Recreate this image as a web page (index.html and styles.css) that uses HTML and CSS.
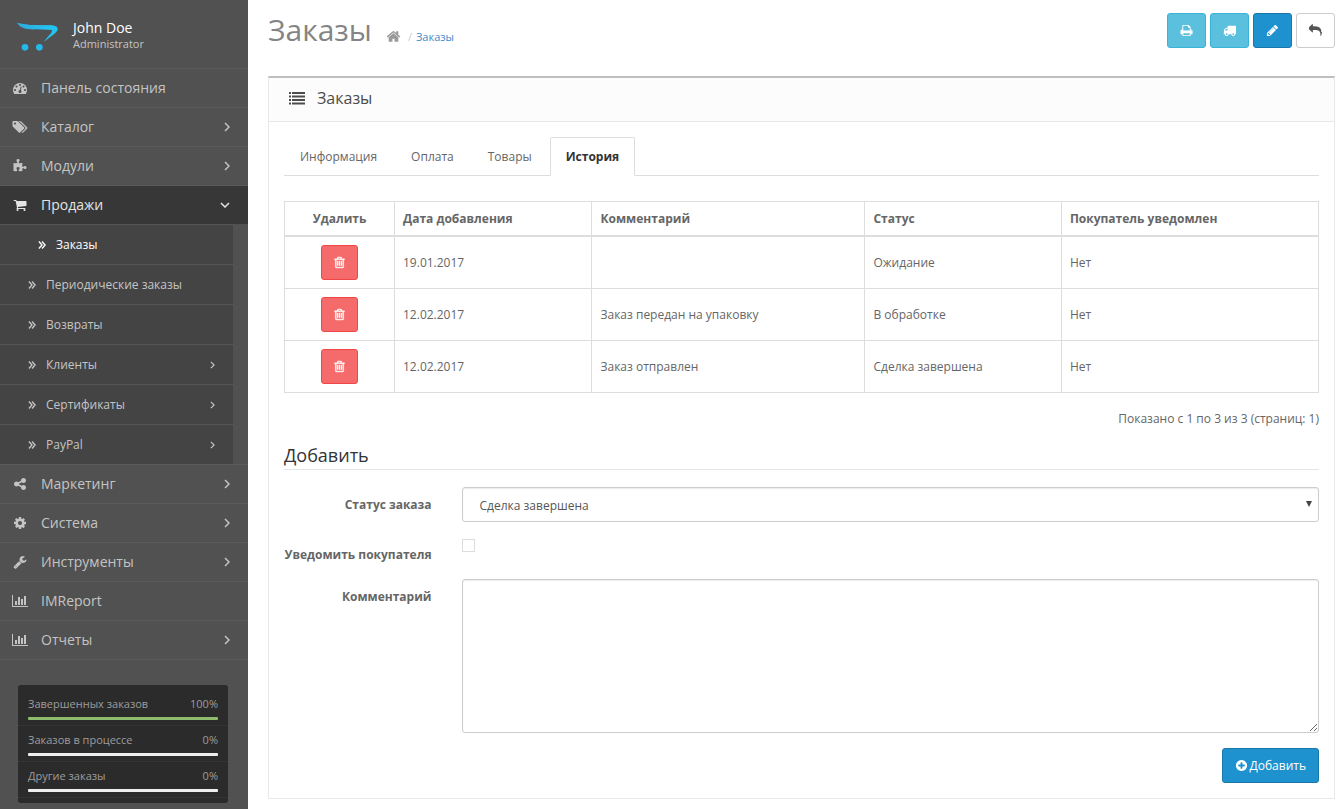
FILE: index.html
```
<!DOCTYPE html>
<html lang="ru">
<head>
<meta charset="utf-8">
<title>Заказы</title>
<link rel="stylesheet" href="styles.css">
</head>
<body>
<svg class="sprite" aria-hidden="true">
  <symbol id="i-dashboard" viewBox="0 0 1792 1792"><path d="M384 1152q0-53-37.5-90.5t-90.5-37.5-90.5 37.5-37.5 90.5 37.5 90.5 90.5 37.5 90.5-37.5 37.5-90.5zm192-448q0-53-37.5-90.5t-90.5-37.5-90.5 37.5-37.5 90.5 37.5 90.5 90.5 37.5 90.5-37.5 37.5-90.5zm428 481l101-382q6-26-7.5-48.5t-38.5-29.5-48 6.5-30 39.5l-101 382q-60 5-107 43.5t-63 98.5q-20 77 20 146t117 89 146-20 89-117q16-60-6-117t-72-91zm660-33q0-53-37.5-90.5t-90.5-37.5-90.5 37.5-37.5 90.5 37.5 90.5 90.5 37.5 90.5-37.5 37.5-90.5zm-640-640q0-53-37.5-90.5t-90.5-37.5-90.5 37.5-37.5 90.5 37.5 90.5 90.5 37.5 90.5-37.5 37.5-90.5zm448 192q0-53-37.5-90.5t-90.5-37.5-90.5 37.5-37.5 90.5 37.5 90.5 90.5 37.5 90.5-37.5 37.5-90.5zm320 448q0 261-141 483-19 29-54 29h-1402q-35 0-54-29-141-221-141-483 0-182 71-348t191-286 286-191 348-71 348 71 286 191 191 286 71 348z"/></symbol>
  <symbol id="i-tags" viewBox="0 0 1920 1792"><path d="M448 448q0-53-37.5-90.5t-90.5-37.5-90.5 37.5-37.5 90.5 37.5 90.5 90.5 37.5 90.5-37.5 37.5-90.5zm1067 576q0 53-37 90l-491 492q-39 37-91 37-53 0-90-37l-715-716q-38-37-64.5-101t-26.5-117v-416q0-52 38-90t90-38h416q53 0 117 26.5t102 64.5l715 714q37 39 37 91zm384 0q0 53-37 90l-491 492q-39 37-91 37-36 0-59-14t-53-45l470-470q37-37 37-90 0-52-37-91l-715-714q-38-38-102-64.5t-117-26.5h224q53 0 117 26.5t102 64.5l715 714q37 39 37 91z"/></symbol>
  <symbol id="i-puzzle" viewBox="0 0 1792 1792"><path d="M1728 1098q0 81-44.5 135t-123.5 54q-41 0-77.5-17.5t-59-38-56.5-38-71-17.5q-110 0-110 124 0 39 16 115t15 115v5q-22 0-33 1-34 3-97.5 11.5t-115.5 13.5-98 5q-61 0-103-26.5t-42-83.5q0-37 17.5-71t38-56.5 38-59 17.5-77.5q0-79-54-123.5t-136-44.5q-84 0-143 45.5t-59 127.5q0 43 15 83t33.5 64.5 33.5 53 15 50.5q0 45-46 89-37 35-117 35-95 0-245-24-9-2-27.5-4t-27.5-4l-13-2q-1 0-3-1-2 0-2-1v-1024q2 1 17.5 3.5t34 5 21.5 3.5q150 24 245 24 80 0 117-35 46-44 46-89 0-22-15-50.5t-33.5-53-33.5-64.5-15-83q0-82 59-127.5t144-45.5q80 0 134 44.5t54 123.5q0 41-17.5 77.5t-38 59-38 56.5-17.5 71q0 57 42 83.5t103 26.5q64 0 180-15t163-17v2q-1 2-3.5 17.5t-5 34-3.5 21.5q-24 150-24 245 0 80 35 117 44 46 89 46 22 0 50.5-15t53-33.5 64.5-33.5 83-15q82 0 127.5 59t45.5 143z"/></symbol>
  <symbol id="i-cart" viewBox="0 0 1792 1792"><path d="M704 1536q0 52-38 90t-90 38-90-38-38-90 38-90 90-38 90 38 38 90zm896 0q0 52-38 90t-90 38-90-38-38-90 38-90 90-38 90 38 38 90zm128-1088v512q0 24-16.5 42.5t-40.5 21.5l-1044 122q13 60 13 70 0 16-24 64h920q26 0 45 19t19 45-19 45-45 19h-1024q-26 0-45-19t-19-45q0-11 8-31.5t16-36 21.5-40 15.5-29.5l-177-823h-204q-26 0-45-19t-19-45 19-45 45-19h256q16 0 28.5 6.5t19.5 15.5 13 24.5 8 26 5.5 29.5 4.5 26h1201q26 0 45 19t19 45z"/></symbol>
  <symbol id="i-share" viewBox="0 0 1792 1792"><path d="M1344 1024q133 0 226.5 93.5t93.5 226.5-93.5 226.5-226.5 93.5-226.5-93.5-93.5-226.5q0-12 2-34l-360-180q-92 86-218 86-133 0-226.5-93.5t-93.5-226.5 93.5-226.5 226.5-93.5q126 0 218 86l360-180q-2-22-2-34 0-133 93.5-226.5t226.5-93.5 226.5 93.5 93.5 226.5-93.5 226.5-226.5 93.5q-126 0-218-86l-360 180q2 22 2 34t-2 34l360 180q92-86 218-86z"/></symbol>
  <symbol id="i-cog" viewBox="0 0 1792 1792"><path d="M1152 896q0-106-75-181t-181-75-181 75-75 181 75 181 181 75 181-75 75-181zm512-109v222q0 12-8 23t-20 13l-185 28q-19 54-39 91 35 50 107 138 10 12 10 25t-9 23q-27 37-99 108t-94 71q-12 0-26-9l-138-108q-44 23-91 38-16 136-29 186-7 28-36 28h-222q-14 0-24.5-8.5t-11.5-21.5l-28-184q-49-16-90-37l-141 107q-10 9-25 9-14 0-25-11-126-114-165-168-7-10-7-23 0-12 8-23 15-21 51-66.5t54-70.5q-27-50-41-99l-183-27q-13-2-21-12.5t-8-23.5v-222q0-12 8-23t19-13l186-28q14-46 39-92-40-57-107-138-10-12-10-24 0-10 9-23 26-36 98.5-107.5t94.5-71.5q13 0 26 10l138 107q44-23 91-38 16-136 29-186 7-28 36-28h222q14 0 24.5 8.5t11.5 21.5l28 184q49 16 90 37l142-107q9-9 24-9 13 0 25 10 129 119 165 170 7 8 7 22 0 12-8 23-15 21-51 66.5t-54 70.5q26 50 41 98l183 28q13 2 21 12.5t8 23.5z"/></symbol>
  <symbol id="i-wrench" viewBox="0 0 1792 1792"><path d="M448 1472q0-26-19-45t-45-19-45 19-19 45 19 45 45 19 45-19 19-45zm644-420l-682 682q-37 37-90 37-52 0-91-37l-106-108q-38-36-38-90 0-53 38-91l681-681q39 98 114.5 173.5t173.5 114.5zm634-435q0 39-23 106-47 134-164.5 217.5t-258.5 83.5q-185 0-316.5-131.5t-131.5-316.5 131.5-316.5 316.5-131.5q58 0 121.5 16.5t107.5 46.5q16 11 16 28t-16 28l-293 169v224l193 107q5-3 79-48.5t135.5-81 70.5-35.5q15 0 23.5 10t8.5 25z"/></symbol>
  <symbol id="i-chart" viewBox="0 0 2048 1792"><path d="M640 896v512h-256v-512h256zm384-512v1024h-256v-1024h256zm1024 1152v128h-2048v-1536h128v1408h1920zm-640-896v768h-256v-768h256zm384-384v1152h-256v-1152h256z"/></symbol>
  <symbol id="i-right" viewBox="0 0 6 10"><path d="M1 1l4 4-4 4" fill="none" stroke="currentColor" stroke-width="1.5"/></symbol>
  <symbol id="i-down" viewBox="0 0 10 6"><path d="M1 1l4 4 4-4" fill="none" stroke="currentColor" stroke-width="1.5"/></symbol>
  <symbol id="i-double" viewBox="0 0 9 10"><path d="M1 1l3.500 4-3.500 4M4.500 1l3.500 4-3.500 4" fill="none" stroke="currentColor" stroke-width="1.500"/></symbol>
  <symbol id="i-home" viewBox="0 0 1792 1792"><path d="M1472 992v480q0 26-19 45t-45 19h-384v-384h-256v384h-384q-26 0-45-19t-19-45v-480q0-1 .5-3t.5-3l575-474 575 474q1 2 1 6zm223-69l-62 74q-8 9-21 11h-3q-13 0-21-7l-692-577-692 577q-12 8-24 7-13-2-21-11l-62-74q-8-10-7-23.5t11-21.500l719-599q32-26 76-26t76 26l244 204v-195q0-14 9-23t23-9h192q14 0 23 9t9 23v408l219 182q10 8 11 21.500t-7 23.500z"/></symbol>
  <symbol id="i-list" viewBox="0 0 16 14"><path d="M0 1h2v2H0zM3 1h13v2H3zM0 4.500h2v2H0zM3 4.500h13v2H3zM0 8h2v2H0zM3 8h13v2H3zM0 11.500h2v2H0zM3 11.500h13v2H3z"/></symbol>
  <symbol id="i-print" viewBox="0 0 1792 1792"><path d="M448 1536h896v-256h-896v256zm0-640h896v-384h-160q-40 0-68-28t-28-68v-160h-640v640zm1152 64q0-26-19-45t-45-19-45 19-19 45 19 45 45 19 45-19 19-45zm128 0v416q0 13-9.500 22.500t-22.500 9.500h-224v160q0 40-28 68t-68 28h-960q-40 0-68-28t-28-68v-160h-224q-13 0-22.500-9.500t-9.500-22.500v-416q0-79 56.500-135.500t135.500-56.500h64v-544q0-40 28-68t68-28h672q40 0 88 20t76 48l152 152q28 28 48 76t20 88v256h64q79 0 135.500 56.500t56.500 135.500z"/></symbol>
  <symbol id="i-truck" viewBox="0 0 1792 1792"><path d="M640 1408q0-52-38-90t-90-38-90 38-38 90 38 90 90 38 90-38 38-90zm-384-512h384v-256h-158q-13 0-22 9l-195 195q-9 9-9 22v30zm1280 512q0-52-38-90t-90-38-90 38-38 90 38 90 90 38 90-38 38-90zm256-1088v1024q0 15-4 26.500t-13.500 18.500-16.500 11.500-23.500 6-22.500 2-25.500 0-22.500-.5q0 106-75 181t-181 75-181-75-75-181h-384q0 106-75 181t-181 75-181-75-75-181h-64q-3 0-22.500.5t-25.500 0-22.500-2-23.500-6-16.500-11.500-13.500-18.500-4-26.500q0-26 19-45t45-19v-320q0-8-.5-35t0-38 2.500-34.500 6.500-37 14-30.500 22.500-30l198-198q19-19 50.500-32t58.500-13h160v-192q0-26 19-45t45-19h1024q26 0 45 19t19 45z"/></symbol>
  <symbol id="i-pencil" viewBox="0 0 1792 1792"><path d="M491 1536l91-91-235-235-91 91v107h128v128h107zm523-928q0-22-22-22-10 0-17 7l-542 542q-7 7-7 17 0 22 22 22 10 0 17-7l542-542q7-7 7-17zm-54-192l416 416-832 832h-416v-416zm683 96q0 53-37 90l-166 166-416-416 166-165q36-38 90-38 53 0 91 38l235 234q37 39 37 91z"/></symbol>
  <symbol id="i-reply" viewBox="0 0 1792 1792"><path d="M1792 1120q0 166-127 451-3 7-10.500 24t-13.500 30-13 22q-12 17-28 17-15 0-23.500-10t-8.500-25q0-9 2.500-26.500t2.500-23.500q5-68 5-123 0-112-19.500-200.500t-54-153.500-89.500-112-120-79.500-150-48-178.500-21.500-206-6h-224v256q0 26-19 45t-45 19-45-19l-512-512q-19-19-19-45t19-45l512-512q19-19 45-19t45 19 19 45v256h224q713 0 875 403 53 134 53 333z"/></symbol>
  <symbol id="i-trash" viewBox="0 0 1792 1792"><path d="M704 736v576q0 14-9 23t-23 9h-64q-14 0-23-9t-9-23v-576q0-14 9-23t23-9h64q14 0 23 9t9 23zm256 0v576q0 14-9 23t-23 9h-64q-14 0-23-9t-9-23v-576q0-14 9-23t23-9h64q14 0 23 9t9 23zm256 0v576q0 14-9 23t-23 9h-64q-14 0-23-9t-9-23v-576q0-14 9-23t23-9h64q14 0 23 9t9 23zm128 724v-948h-896v948q0 22 7 40.500t14.500 27 10.500 8.500h832q3 0 10.500-8.500t14.500-27 7-40.500zm-672-1076h448l-48-117q-7-9-17-11h-317q-10 2-17 11zm928 32v64q0 14-9 23t-23 9h-96v948q0 83-47 143.500t-113 60.500h-832q-66 0-113-58.500t-47-141.500v-952h-96q-14 0-23-9t-9-23v-64q0-14 9-23t23-9h309l70-167q15-37 54-63t79-26h320q40 0 79 26t54 63l70 167h309q14 0 23 9t9 23z"/></symbol>
  <symbol id="i-plus" viewBox="0 0 1792 1792"><path d="M1344 960v-128q0-26-19-45t-45-19h-256v-256q0-26-19-45t-45-19h-128q-26 0-45 19t-19 45v256h-256q-26 0-45 19t-19 45v128q0 26 19 45t45 19h256v256q0 26 19 45t45 19h128q26 0 45-19t19-45v-256h256q26 0 45-19t19-45zm320-64q0 209-103 385.500t-279.500 279.500-385.500 103-385.500-103-279.500-279.500-103-385.500 103-385.500 279.500-279.500 385.500-103 385.500 103 279.500 279.500 103 385.500z"/></symbol>
</svg>
<div class="layout">
  <aside class="sidebar">
    <div class="profile">
      <svg class="logo" viewBox="48 68 126 90" aria-hidden="true">
        <defs><linearGradient id="cartFill" x1="0" y1="0" x2="1" y2="0"><stop offset="0" stop-color="#2fa9dd"/><stop offset="1" stop-color="#21c6f3"/></linearGradient></defs>
        <path fill="url(#cartFill)" d="M48 68C54 76 68 80 90 80L142 86C152 87 156 90 156 95C154 103 142 113 131 128C160 107 173 98 173 90C173 81 165 78 150 78L90 77C68 76 54 74 48 68Z"/>
        <circle fill="#24b9ec" cx="75" cy="144" r="10"/><circle fill="#24b9ec" cx="118" cy="144" r="10"/>
        <path fill="url(#cartFill)" d="M52 71C62 88 80 91 110 90L157 92L157 79L90 77Z"/>
      </svg>
      <div class="profile-text">
        <div class="profile-name">John Doe</div>
        <div class="profile-role">Administrator</div>
      </div>
    </div>
    <nav>
      <ul class="menu">
        <li><a class="menu-link" href="#"><svg class="menu-icon"><use href="#i-dashboard"/></svg><span>Панель состояния</span></a></li>
        <li><a class="menu-link" href="#"><svg class="menu-icon"><use href="#i-tags"/></svg><span>Каталог</span><svg class="chevron"><use href="#i-right"/></svg></a></li>
        <li><a class="menu-link" href="#"><svg class="menu-icon"><use href="#i-puzzle"/></svg><span>Модули</span><svg class="chevron"><use href="#i-right"/></svg></a></li>
        <li>
          <a class="menu-link menu-link-open" href="#"><svg class="menu-icon"><use href="#i-cart"/></svg><span>Продажи</span><svg class="chevron"><use href="#i-down"/></svg></a>
          <ul class="submenu">
            <li><a class="sub-link sub-link-active" href="#"><svg class="double"><use href="#i-double"/></svg><span>Заказы</span></a></li>
            <li><a class="sub-link" href="#"><svg class="double"><use href="#i-double"/></svg><span>Периодические заказы</span></a></li>
            <li><a class="sub-link" href="#"><svg class="double"><use href="#i-double"/></svg><span>Возвраты</span></a></li>
            <li><a class="sub-link" href="#"><svg class="double"><use href="#i-double"/></svg><span>Клиенты</span><svg class="chevron chevron-small"><use href="#i-right"/></svg></a></li>
            <li><a class="sub-link" href="#"><svg class="double"><use href="#i-double"/></svg><span>Сертификаты</span><svg class="chevron chevron-small"><use href="#i-right"/></svg></a></li>
            <li><a class="sub-link" href="#"><svg class="double"><use href="#i-double"/></svg><span>PayPal</span><svg class="chevron chevron-small"><use href="#i-right"/></svg></a></li>
          </ul>
        </li>
        <li><a class="menu-link" href="#"><svg class="menu-icon"><use href="#i-share"/></svg><span>Маркетинг</span><svg class="chevron"><use href="#i-right"/></svg></a></li>
        <li><a class="menu-link" href="#"><svg class="menu-icon"><use href="#i-cog"/></svg><span>Система</span><svg class="chevron"><use href="#i-right"/></svg></a></li>
        <li><a class="menu-link" href="#"><svg class="menu-icon"><use href="#i-wrench"/></svg><span>Инструменты</span><svg class="chevron"><use href="#i-right"/></svg></a></li>
        <li><a class="menu-link" href="#"><svg class="menu-icon"><use href="#i-chart"/></svg><span>IMReport</span></a></li>
        <li><a class="menu-link" href="#"><svg class="menu-icon"><use href="#i-chart"/></svg><span>Отчеты</span><svg class="chevron"><use href="#i-right"/></svg></a></li>
      </ul>
    </nav>
    <ul class="stats">
      <li><div class="stat-text"><span>Завершенных заказов</span><span>100%</span></div><div class="bar"><div class="bar-fill" style="width:100%"></div></div></li>
      <li><div class="stat-text"><span>Заказов в процессе</span><span>0%</span></div><div class="bar"><div class="bar-fill" style="width:0%"></div></div></li>
      <li><div class="stat-text"><span>Другие заказы</span><span>0%</span></div><div class="bar"><div class="bar-fill" style="width:0%"></div></div></li>
    </ul>
  </aside>
  <main class="content">
    <header class="page-header">
      <h1>Заказы</h1>
      <nav class="breadcrumb">
        <a class="crumb-home" href="#" aria-label="Главная"><svg class="home-icon"><use href="#i-home"/></svg></a>
        <span class="crumb-sep">/</span>
        <a class="crumb" href="#">Заказы</a>
      </nav>
      <div class="actions">
        <button class="btn btn-info" type="button" aria-label="Печать"><svg class="icon"><use href="#i-print"/></svg></button>
        <button class="btn btn-info" type="button" aria-label="Доставка"><svg class="icon"><use href="#i-truck"/></svg></button>
        <button class="btn btn-primary" type="button" aria-label="Редактировать"><svg class="icon"><use href="#i-pencil"/></svg></button>
        <button class="btn btn-default" type="button" aria-label="Назад"><svg class="icon"><use href="#i-reply"/></svg></button>
      </div>
    </header>
    <section class="panel">
      <div class="panel-heading"><svg class="list-icon"><use href="#i-list"/></svg><h2>Заказы</h2></div>
      <div class="panel-body">
        <ul class="tabs">
          <li><a class="tab" href="#">Информация</a></li>
          <li><a class="tab" href="#">Оплата</a></li>
          <li><a class="tab" href="#">Товары</a></li>
          <li><a class="tab tab-active" href="#">История</a></li>
        </ul>
        <table class="history">
          <colgroup><col class="col-delete"><col class="col-date"><col class="col-comment"><col class="col-status"><col></colgroup>
          <thead><tr><th class="center">Удалить</th><th>Дата добавления</th><th>Комментарий</th><th>Статус</th><th>Покупатель уведомлен</th></tr></thead>
          <tbody>
            <tr><td class="center"><button class="btn btn-danger" type="button" aria-label="Удалить"><svg class="icon"><use href="#i-trash"/></svg></button></td><td>19.01.2017</td><td></td><td>Ожидание</td><td>Нет</td></tr>
            <tr><td class="center"><button class="btn btn-danger" type="button" aria-label="Удалить"><svg class="icon"><use href="#i-trash"/></svg></button></td><td>12.02.2017</td><td>Заказ передан на упаковку</td><td>В обработке</td><td>Нет</td></tr>
            <tr><td class="center"><button class="btn btn-danger" type="button" aria-label="Удалить"><svg class="icon"><use href="#i-trash"/></svg></button></td><td>12.02.2017</td><td>Заказ отправлен</td><td>Сделка завершена</td><td>Нет</td></tr>
          </tbody>
        </table>
        <p class="shown">Показано с 1 по 3 из 3 (страниц: 1)</p>
        <form>
          <h3>Добавить</h3>
          <div class="form-row">
            <label for="status">Статус заказа</label>
            <div class="control select-wrap"><select id="status" class="field select"><option>Сделка завершена</option></select></div>
          </div>
          <div class="form-row">
            <label for="notify">Уведомить покупателя</label>
            <div class="control"><input id="notify" class="check" type="checkbox"></div>
          </div>
          <div class="form-row">
            <label for="comment">Комментарий</label>
            <div class="control"><textarea id="comment" class="field area"></textarea></div>
          </div>
          <div class="submit"><button class="btn btn-primary" type="button"><svg class="icon"><use href="#i-plus"/></svg><span>Добавить</span></button></div>
        </form>
      </div>
    </section>
  </main>
</div>
</body>
</html>
```
FILE: styles.css
```
* { box-sizing: border-box; }
body { margin: 0; background: #fff; color: #666; font: 12px/17px "Open Sans", "Noto Sans", sans-serif; }
ul { list-style: none; margin: 0; padding: 0; }
a { text-decoration: none; color: inherit; }
h1, h2, h3, p { margin: 0; }
svg { fill: currentColor; flex: none; }
.sprite { display: none; }
.layout { display: grid; grid-template-columns: 248px minmax(0, 1fr); min-height: 100vh; }

.sidebar { background: #515151; color: #c4c4c4; }
.profile { display: flex; gap: 15px; padding: 18px 16px 15px; height: 68px; }
.logo { width: 42px; height: 30px; margin-top: 4px; }
.profile-name { font-size: 14px; line-height: 19px; color: #fff; }
.profile-role { font-size: 11px; line-height: 13px; }
.menu { border-bottom: 1px solid #5a5a5a; }
.menu-link { display: flex; align-items: center; height: 39px; padding: 0 18px 0 12px; border-top: 1px solid #5a5a5a; font-size: 14px; }
.menu-link span { padding-bottom: 2px; }
.menu-icon { width: 16px; height: 14px; margin-right: 13px; }
.menu-link-open { background: #373737; color: #e4e4e4; }
.chevron { width: 10px; height: 10px; margin-left: auto; }
.menu-link-open .chevron { height: 6px; }
.menu-link:not(.menu-link-open) .chevron { width: 6px; }
.submenu { margin-right: 15px; background: #444; }
.sub-link { display: flex; align-items: center; height: 40px; padding: 0 18px 0 28px; border-top: 1px solid #555; }
.sub-link-active { padding-left: 38px; color: #fff; }
.double { width: 8px; height: 10px; margin-right: 10px; }
.chevron-small { width: 5px; height: 8px; }
.stats { margin: 25px 20px 6px 18px; padding: 5px 0; background: #2b2b2b; border-radius: 3px; color: #9d9d9d; font-size: 11px; }
.stats li { height: 36px; padding: 5px 10px; border-bottom: 1px dotted #3c3c3c; }
.stat-text { display: flex; justify-content: space-between; }
.bar { height: 3px; margin-top: 5px; background: #eee; border-radius: 1px; overflow: hidden; }
.bar-fill { height: 100%; background: #8fbb6c; }

.content { padding: 13px 9px 10px 20px; }
.page-header { display: flex; align-items: flex-start; margin-bottom: 28px; }
h1 { font-size: 30px; line-height: 33px; font-weight: 400; color: #848484; }
.breadcrumb { display: flex; align-items: center; margin: 15px 0 0 14px; font-size: 11px; }
.crumb-home { color: #999; }
.home-icon { display: block; width: 15px; height: 15px; }
.crumb-sep { margin: 0 4px 0 7px; color: #ccc; }
.crumb { color: #428bca; }
.actions { display: flex; gap: 4px; margin-left: auto; }
.btn { display: inline-flex; align-items: center; justify-content: center; gap: 2px; height: 35px; padding: 0 12px; border: 1px solid; border-radius: 3px; font: inherit; color: #fff; }
.icon { width: 13px; height: 13px; }
.btn-info { background: #5bc0de; border-color: #39b3d7; }
.btn-primary { background: #1e91cf; border-color: #1978ab; }
.btn-default { background: #fff; border-color: #ccc; color: #555; }
.btn-danger { background: #f56b6b; border-color: #f24545; padding: 0 11px; }
.btn-danger .icon { stroke: currentColor; stroke-width: 50px; }

.panel { border: 1px solid #e8e8e8; border-top: 2px solid #bfbfbf; }
.panel-heading { display: flex; align-items: center; gap: 12px; height: 44px; padding: 0 20px 4px; border-bottom: 1px solid #e8e8e8; background: #fcfcfc; color: #4c4c4c; }
h2 { font-size: 16px; font-weight: 400; line-height: 22px; }
.list-icon { width: 16px; height: 14px; }
.panel-body { padding: 15px; }
.tabs { display: flex; gap: 2px; margin-bottom: 25px; border-bottom: 1px solid #ddd; }
.tab { display: block; margin-bottom: -1px; padding: 10px 15px; line-height: 17px; border: 1px solid transparent; border-radius: 2px 2px 0 0; }
.tab-active { border-color: #ddd #ddd #fff; background: #fff; color: #333; font-weight: 700; }
.history { width: 100%; table-layout: fixed; border-collapse: collapse; }
.history th, .history td { padding: 8px; border: 1px solid #ddd; text-align: left; vertical-align: middle; }
.history th { border-bottom-width: 2px; font-weight: 700; }
.history .center { text-align: center; }
.history .btn { vertical-align: middle; }
.col-delete { width: 110px; }
.col-date { width: 19.1%; }
.col-status { width: 19%; }
.col-comment { width: 26.4%; }
.shown { margin: 17px 0 16px; text-align: right; }
h3 { margin-bottom: 17px; padding-bottom: 2px; border-bottom: 1px solid #e5e5e5; font-size: 18px; line-height: 24px; font-weight: 400; color: #333; }
.form-row { display: grid; grid-template-columns: repeat(12, minmax(0, 1fr)); column-gap: 30px; margin-bottom: 15px; }
.form-row label { grid-column: span 2; padding-top: 9px; line-height: 18px; text-align: right; font-weight: 700; white-space: nowrap; }
.control { grid-column: span 10; }
.field { display: block; width: 100%; border: 1px solid #ccc; border-radius: 3px; background: #fff; color: #555; font: inherit; box-shadow: inset 0 1px 1px rgba(0, 0, 0, .08); }
.select { appearance: none; height: 35px; padding: 1px 17px 0; }
.select-wrap { position: relative; }
.select-wrap::after { content: ""; position: absolute; right: 7px; top: 14px; border: 3px solid transparent; border-top: 6px solid #444; border-bottom: 0; pointer-events: none; }
.check { appearance: none; display: block; width: 13px; height: 13px; margin: 2px 0 0; border: 1px solid #ddd; background: #fff; }
.area { height: 154px; padding: 8px 13px; resize: vertical; }
.submit { display: flex; justify-content: flex-end; }
```
